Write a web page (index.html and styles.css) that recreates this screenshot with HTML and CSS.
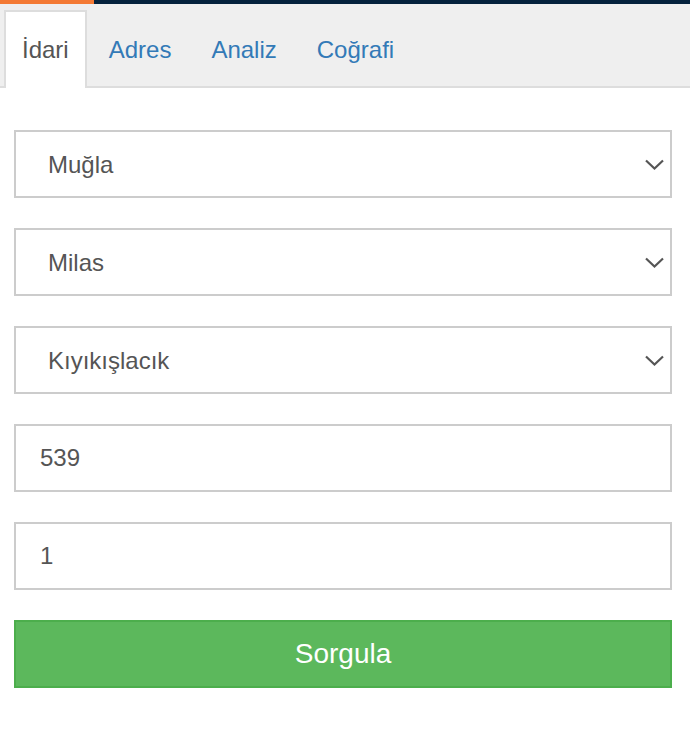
FILE: index.html
```html
<!DOCTYPE html>
<html lang="tr">
<head>
<meta charset="utf-8">
<title>Sorgu</title>
<link rel="stylesheet" href="styles.css">
</head>
<body>
<div class="topbar"><div class="topbar-accent"></div></div>
<ul class="tabs">
  <li class="tab active"><a href="#">İdari</a></li>
  <li class="tab"><a href="#">Adres</a></li>
  <li class="tab"><a href="#">Analiz</a></li>
  <li class="tab"><a href="#">Coğrafi</a></li>
</ul>
<form class="form">
  <div class="select-wrap">
    <select class="field select"><option>Muğla</option></select>
    <svg class="chevron" width="19" height="11" viewBox="0 0 19 11"><path d="M1 1.5 L9.5 9.5 L18 1.5" fill="none" stroke="#555" stroke-width="2.2"/></svg>
  </div>
  <div class="select-wrap">
    <select class="field select"><option>Milas</option></select>
    <svg class="chevron" width="19" height="11" viewBox="0 0 19 11"><path d="M1 1.5 L9.5 9.5 L18 1.5" fill="none" stroke="#555" stroke-width="2.2"/></svg>
  </div>
  <div class="select-wrap">
    <select class="field select"><option>Kıyıkışlacık</option></select>
    <svg class="chevron" width="19" height="11" viewBox="0 0 19 11"><path d="M1 1.5 L9.5 9.5 L18 1.5" fill="none" stroke="#555" stroke-width="2.2"/></svg>
  </div>
  <input class="field input" type="text" value="539">
  <input class="field input" type="text" value="1">
  <button class="btn" type="button">Sorgula</button>
</form>
</body>
</html>
```
FILE: styles.css
```css
* { box-sizing: border-box; }
html, body { margin: 0; padding: 0; background: #fff; }
body { font-family: "Liberation Sans", Arial, Helvetica, sans-serif; color: #555; }

.topbar { height: 4px; background: #04223d; }
.topbar-accent { width: 94px; height: 4px; background: #f47a35; }

.tabs {
  list-style: none;
  margin: 0;
  padding: 6px 0 0 4px;
  background: #efefef;
  border-bottom: 2px solid #ddd;
  display: flex;
  height: 84px;
}
.tab { margin-right: 4px; margin-bottom: -2px; }
.tab a {
  display: block;
  height: 78px;
  padding: 0 16px;
  border: 2px solid transparent;
  border-bottom: none;
  font-size: 24px;
  line-height: 75px;
  color: #337ab7;
  text-decoration: none;
}
.tab.active a {
  background: #fff;
  border-color: #ddd;
  color: #555;
}

.form {
  display: flex;
  flex-direction: column;
  gap: 30px;
  width: 658px;
  margin: 42px 0 0 14px;
}
.select-wrap { position: relative; }
.field {
  display: block;
  width: 100%;
  height: 68px;
  border: 2px solid #ccc;
  border-radius: 0;
  background: #fff;
  font-family: "Liberation Sans", Arial, Helvetica, sans-serif;
  font-size: 24px;
  color: #555;
  margin: 0;
  outline: none;
}
.select {
  -webkit-appearance: none;
  appearance: none;
  padding: 0 40px 0 32px;
}
.input { padding: 0 24px; }
.chevron {
  position: absolute;
  right: 8px;
  top: 29px;
  pointer-events: none;
}
.btn {
  height: 68px;
  width: 100%;
  border: 2px solid #4cae4c;
  background: #5cb85c;
  color: #fff;
  font-family: "Liberation Sans", Arial, Helvetica, sans-serif;
  font-size: 28px;
  padding: 0;
  border-radius: 0;
}
```
